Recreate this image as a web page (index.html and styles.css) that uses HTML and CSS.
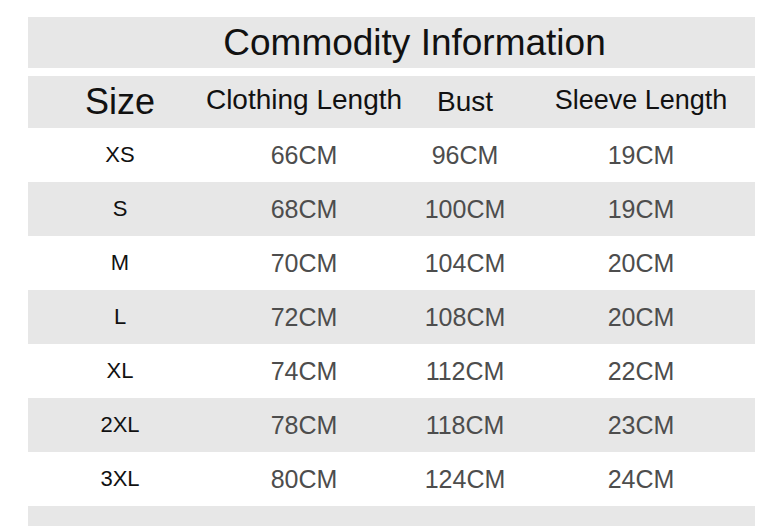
FILE: index.html
```html
<!DOCTYPE html>
<html>
<head>
<meta charset="utf-8">
<link rel="stylesheet" href="styles.css">
</head>
<body>
<div class="sheet">
  <div class="title">Commodity Information</div>
  <div class="table">
    <div class="row head">
      <div class="c size-h">Size</div>
      <div class="c cl-h">Clothing Length</div>
      <div class="c bust-h">Bust</div>
      <div class="c">Sleeve Length</div>
    </div>
    <div class="row"><div class="c s">XS</div><div class="c v">66CM</div><div class="c v">96CM</div><div class="c v">19CM</div></div>
    <div class="row alt"><div class="c s">S</div><div class="c v">68CM</div><div class="c v">100CM</div><div class="c v">19CM</div></div>
    <div class="row"><div class="c s">M</div><div class="c v">70CM</div><div class="c v">104CM</div><div class="c v">20CM</div></div>
    <div class="row alt"><div class="c s">L</div><div class="c v">72CM</div><div class="c v">108CM</div><div class="c v">20CM</div></div>
    <div class="row"><div class="c s">XL</div><div class="c v">74CM</div><div class="c v">112CM</div><div class="c v">22CM</div></div>
    <div class="row alt"><div class="c s">2XL</div><div class="c v">78CM</div><div class="c v">118CM</div><div class="c v">23CM</div></div>
    <div class="row"><div class="c s">3XL</div><div class="c v">80CM</div><div class="c v">124CM</div><div class="c v">24CM</div></div>
    <div class="row alt tail"></div>
  </div>
</div>
</body>
</html>
```
FILE: styles.css
```css
html, body {
  margin: 0;
  padding: 0;
  background: #ffffff;
}
body {
  font-family: "Liberation Sans", Arial, sans-serif;
  color: #111;
  width: 773px;
  height: 526px;
  overflow: hidden;
}
.sheet {
  padding: 17px 18px 0 28px;
}
.title {
  height: 51px;
  background: #e7e7e7;
  display: flex;
  align-items: center;
  justify-content: center;
  font-size: 37px;
  color: #111;
  padding-left: 46px;
}
.table {
  margin-top: 8px;
}
.row {
  display: grid;
  grid-template-columns: 184px 184px 138px 214px;
  height: 54px;
  align-items: center;
}
.row.head {
  height: 52px;
  background: #e7e7e7;
}
.row.alt {
  background: #e7e7e7;
}
.row.tail {
  height: 20px;
}
.c {
  display: flex;
  justify-content: center;
  white-space: nowrap;
}
.head .c {
  font-size: 27px;
  color: #111;
  padding-bottom: 4px;
}
.head .cl-h {
  font-size: 28px;
}
.head .size-h {
  font-size: 36px;
  padding-bottom: 0;
}
.head .bust-h {
  font-size: 28px;
  padding-bottom: 0;
}
.s {
  font-size: 22px;
  color: #111;
}
.v {
  font-size: 25px;
  color: #4d4d4d;
}
```
